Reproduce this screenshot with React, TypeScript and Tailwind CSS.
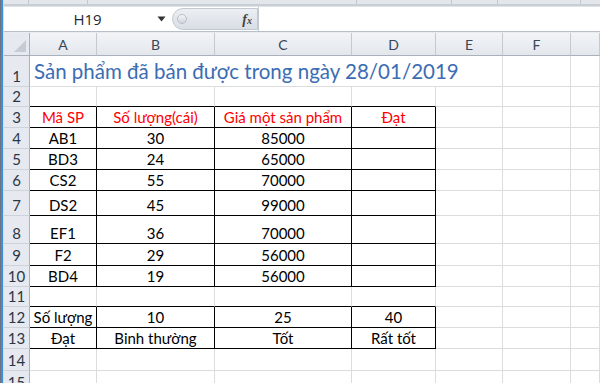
const GRID = 'grid grid-cols-[26px_67px_118px_137px_84px_67px_68px_29px] shrink-0';

type Row = { n: number; h: string; cells: string[]; red?: boolean };

const rows: Row[] = [
  { n: 2, h: 'h-[20px]', cells: [] },
  { n: 3, h: 'h-[21px]', cells: ['Mã SP', 'Số lượng(cái)', 'Giá một sản phẩm', 'Đạt'], red: true },
  { n: 4, h: 'h-[21px]', cells: ['AB1', '30', '85000', ''] },
  { n: 5, h: 'h-[21px]', cells: ['BD3', '24', '65000', ''] },
  { n: 6, h: 'h-[21px]', cells: ['CS2', '55', '70000', ''] },
  { n: 7, h: 'h-[25px]', cells: ['DS2', '45', '99000', ''] },
  { n: 8, h: 'h-[28px]', cells: ['EF1', '36', '70000', ''] },
  { n: 9, h: 'h-[22px]', cells: ['F2', '29', '56000', ''] },
  { n: 10, h: 'h-[21px]', cells: ['BD4', '19', '56000', ''] },
  { n: 11, h: 'h-[20px]', cells: [] },
  { n: 12, h: 'h-[21px]', cells: ['Số lượng', '10', '25', '40'] },
  { n: 13, h: 'h-[21px]', cells: ['Đạt', 'Binh thường', 'Tốt', 'Rất tốt'] },
  { n: 14, h: 'h-[22px]', cells: [] },
  { n: 15, h: 'h-[22px]', cells: [] },
];

function RowHead({ n }: { n: number }) {
  return (
    <div className="flex items-end justify-center pb-[1px] bg-[#e6eaf0] border-r border-r-[#a9b1bc] border-b border-b-[#cdd3db] text-[15px] leading-[18px] text-[#2b3645]">
      {n}
    </div>
  );
}

function Cell({ n, c, text, red }: { n: number; c: number; text?: string; red?: boolean }) {
  const inTable = (n >= 3 && n <= 10) || n === 12 || n === 13;
  const bottomBlack = c <= 3 && n >= 2 && n <= 13;
  const rightBlack = c <= 3 && inTable;
  return (
    <div
      className={`flex items-end justify-center pb-[1px] whitespace-nowrap text-[15px] leading-[18px] border-b border-r ${
        bottomBlack ? 'border-b-black' : 'border-b-[#dadcdd]'
      } ${rightBlack ? 'border-r-black' : 'border-r-[#dadcdd]'} ${red ? 'text-[#ff0000]' : 'text-black'}`}
    >
      {text}
    </div>
  );
}

export default function App() {
  const letters = ['A', 'B', 'C', 'D', 'E', 'F', ''];
  return (
    <div className="w-[600px] h-[383px] overflow-hidden bg-white flex font-['Lato',sans-serif]">
      <div className="flex w-[4px] shrink-0">
        <div className="w-[1px] bg-[#6b7280]" />
        <div className="w-[2px] bg-[#3b8fdc]" />
        <div className="w-[1px] bg-[#cfe1f3]" />
      </div>
      <div className="flex-1 flex flex-col overflow-hidden">
        {/* ribbon edge */}
        <div className="h-[4px] shrink-0 bg-[#e3e7ec] flex">
          <div className="w-[25px] border-r border-r-[#c2c8d0]" />
          <div className="w-[59px] border-r border-r-[#c2c8d0]" />
          <div className="w-[269px] border-r border-r-[#c2c8d0]" />
          <div className="w-[95px] border-r border-r-[#c2c8d0]" />
          <div className="w-[46px] border-r border-r-[#c2c8d0]" />
          <div className="w-[83px] border-r border-r-[#c2c8d0]" />
        </div>
        <div className="h-[3px] shrink-0 bg-[#c9ced5] border-b border-b-[#dfe3e8]" />
        {/* formula bar */}
        <div className="h-[24px] shrink-0 flex items-center bg-white">
          <div className="w-[164px] h-full flex items-center">
            <span className="flex-1 text-center pl-[14px] text-[15px] text-[#1f2733] font-['Open_Sans',sans-serif]">H19</span>
            <svg width="9" height="6" viewBox="0 0 9 6" className="mr-[2px]">
              <path d="M0.5 0.5 L8.5 0.5 L4.5 5.5 Z" fill="#333" />
            </svg>
          </div>
          <div className="ml-[4px] w-[86px] h-[22px] rounded-l-full bg-gradient-to-b from-[#eceff3] to-[#d9dee5] border border-[#c3c9d1] flex items-center">
            <div className="ml-[4px] w-[10px] h-[10px] rounded-full bg-gradient-to-b from-[#f5f6f8] to-[#cfd4db] border border-[#b8bec7]" />
            <span className="ml-auto mr-[5px] font-['Liberation_Serif',serif] italic font-bold text-[14px] text-[#444]">
              f<span className="text-[10px]">x</span>
            </span>
          </div>
          <div className="flex-1 h-full bg-white border-l border-l-[#c3c9d1]" />
        </div>
        <div className="h-[1px] shrink-0 bg-[#b8bfc8]" />
        <div className="h-[1px] shrink-0 bg-[#e8ebef]" />
        {/* column headers */}
        <div className={`${GRID} h-[23px]`}>
          <div className="relative bg-[#e6eaf0] border-r border-r-[#a9b1bc] border-b border-b-[#a9b1bc]">
            <svg width="12" height="12" viewBox="0 0 12 12" className="absolute right-[3px] bottom-[3px]">
              <path d="M12 0 L12 12 L0 12 Z" fill="#c6ccd4" />
            </svg>
          </div>
          {letters.map((l, i) => (
            <div
              key={i}
              className="flex items-center justify-center bg-gradient-to-b from-[#f2f4f7] to-[#e3e7ec] border-r border-r-[#c3c9d1] border-b border-b-[#a9b1bc] text-[14px] text-[#3a4658]"
            >
              {l}
            </div>
          ))}
        </div>
        {/* row 1 */}
        <div className={`${GRID} h-[31px]`}>
          <RowHead n={1} />
          <div className="col-span-5 flex items-end pl-[4px] pb-[2px] whitespace-nowrap text-[20.5px] leading-[26px] text-[#3b6db3] border-r border-r-[#dadcdd] border-b border-b-[#dadcdd]">
            Sản phẩm đã bán được trong ngày 28/01/2019
          </div>
          <Cell n={1} c={5} />
          <Cell n={1} c={6} />
        </div>
        {rows.map((r) => (
          <div key={r.n} className={`${GRID} ${r.h}`}>
            <RowHead n={r.n} />
            {[0, 1, 2, 3, 4, 5, 6].map((c) => (
              <Cell key={c} n={r.n} c={c} text={r.cells[c]} red={r.red} />
            ))}
          </div>
        ))}
      </div>
    </div>
  );
}
